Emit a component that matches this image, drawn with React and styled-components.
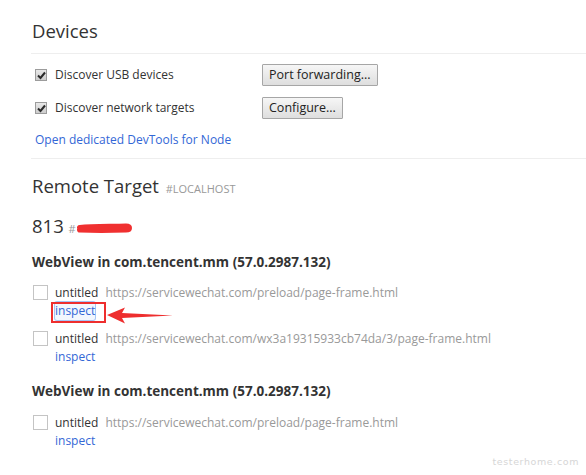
import React from "react";
import styled, { createGlobalStyle } from "styled-components";

const Global = createGlobalStyle`
  html, body { margin: 0; padding: 0; background: #fff; }
  body { font-family: "Open Sans", "Noto Sans", sans-serif; color: #333; }
  * { box-sizing: border-box; }
`;

const Page = styled.div`
  position: relative;
  width: 586px;
  height: 475px;
  overflow: hidden;
  padding: 19px 0 0 31px;
  font-size: 12px;
`;

const SectionHeader = styled.div`
  font-size: 18.5px;
  line-height: 24px;
  font-weight: 400;
  padding: 0 0 10px 1px;
  border-bottom: 1px solid #eee;
  color: #333;
`;

const DeviceBody = styled.div`
  display: flex;
  flex-direction: column;
  gap: 11px;
  padding: 10px 0 8px 4px;
  border-bottom: 1px solid #eee;
`;

const OptionRow = styled.div`
  display: flex;
  align-items: center;
  height: 22px;
`;

const OptionLabel = styled.label`
  display: flex;
  align-items: center;
  gap: 8px;
  width: 227px;
  line-height: 18px;
`;

const CheckBox = styled.span`
  flex: none;
  width: 12px;
  height: 12px;
  border: 1px solid ${(p) => (p.checked ? "#9c9c9c" : "#c4c4c4")};
  background: ${(p) => (p.checked ? "linear-gradient(#e8e8e8, #cdcdcd)" : "#fff")};
  display: flex;
  align-items: center;
  justify-content: center;
`;

const Button = styled.button`
  font-family: inherit;
  font-size: 12.5px;
  color: #222;
  height: 22px;
  padding: 0 6px;
  border: 1px solid #a6a6a6;
  border-radius: 1px;
  background: linear-gradient(#f6f6f6, #dedede);
  line-height: 18px;
`;

const Link = styled.a`
  color: #3367d6;
  text-decoration: none;
  line-height: 20px;
  height: 20px;
  display: block;
`;

const RemoteHeader = styled.div`
  margin-top: ${(p) => p.top}px;
  padding-left: 1px;
  font-size: 18.5px;
  line-height: 24px;
  height: 24px;
  color: #333;
`;

const Tag = styled.span`
  font-size: 11px;
  line-height: 1;
  color: #999;
  text-transform: uppercase;
  position: relative;
  margin-left: ${(p) => (p.tight ? 0 : 2)}px;
`;

const Scribble = styled.svg`
  position: absolute;
  left: 7px;
  top: 1px;
`;

const BrowserHeader = styled.div`
  margin-top: ${(p) => p.top}px;
  padding-left: 1px;
  font-weight: 700;
  font-size: 13.5px;
  line-height: 18px;
  color: #333;
`;

const TargetList = styled.div`
  display: flex;
  flex-direction: column;
  gap: 10px;
  margin-top: ${(p) => p.top}px;
  padding-left: 2px;
`;

const Target = styled.div`
  display: flex;
  gap: 7px;
  position: relative;
`;

const TargetBox = styled(CheckBox)`
  width: 15px;
  height: 15px;
  margin-top: 1px;
`;

const TargetInfo = styled.div`
  display: flex;
  flex-direction: column;
  line-height: 18px;
`;

const TitleLine = styled.div`
  display: flex;
  gap: 7px;
  white-space: nowrap;
`;

const Url = styled.span`
  color: #999;
`;

const Inspect = styled.a`
  color: #3367d6;
  text-decoration: none;
  align-self: flex-start;
  position: relative;
  ${(p) =>
    p.focused &&
    `
    border-radius: 2px;
    box-shadow: 0 0 0 1px #a6c6f6;
    background: rgba(166,198,246,0.15);
  `}
`;

const RedBox = styled.div`
  position: absolute;
  left: -4px;
  top: 0;
  width: 55px;
  height: 21px;
  border: 2px solid #ee2e2e;
`;

const Arrow = styled.svg`
  position: absolute;
  left: 52px;
  top: 5px;
`;

const Watermark = styled.div`
  position: absolute;
  right: 7px;
  bottom: 8px;
  font-family: "DejaVu Sans", sans-serif;
  font-size: 9.5px;
  letter-spacing: 0.6px;
  color: #d6d6d6;
`;

const Check = () => (
  <svg width="9" height="9" viewBox="0 0 9 9">
    <path d="M1 4.5 L3.5 7 L8 1.5" fill="none" stroke="#2a2a2a" strokeWidth="2" />
  </svg>
);

const targetsA = [
  { url: "https://servicewechat.com/preload/page-frame.html", focused: true },
  { url: "https://servicewechat.com/wx3a19315933cb74da/3/page-frame.html" },
];
const targetsB = [{ url: "https://servicewechat.com/preload/page-frame.html" }];

const TargetItem = ({ url, focused }) => (
  <Target>
    <TargetBox />
    <TargetInfo>
      <TitleLine>
        <span>untitled</span>
        <Url>{url}</Url>
      </TitleLine>
      <Inspect focused={focused}>
        inspect
        {focused && (
          <>
            <RedBox />
            <Arrow width="68" height="17" viewBox="0 0 68 17">
              <path d="M0 8 L18 0.5 L15 6 L66 8.5 L15 11 L18 16.5 Z" fill="#ee2e2e" />
            </Arrow>
          </>
        )}
      </Inspect>
    </TargetInfo>
  </Target>
);

export default function App() {
  return (
    <>
      <Global />
      <Page>
        <SectionHeader>Devices</SectionHeader>
        <DeviceBody>
          <OptionRow>
            <OptionLabel>
              <CheckBox checked>
                <Check />
              </CheckBox>
              Discover USB devices
            </OptionLabel>
            <Button>Port forwarding...</Button>
          </OptionRow>
          <OptionRow>
            <OptionLabel>
              <CheckBox checked>
                <Check />
              </CheckBox>
              Discover network targets
            </OptionLabel>
            <Button>Configure...</Button>
          </OptionRow>
          <Link>Open dedicated DevTools for Node</Link>
        </DeviceBody>
        <RemoteHeader top={15}>
          Remote Target <Tag>#LOCALHOST</Tag>
        </RemoteHeader>
        <RemoteHeader top={16}>
          813{" "}
          <Tag tight>
            #
            <Scribble width="58" height="12" viewBox="0 0 58 12">
              <path d="M4 6 C16 4.5, 34 5, 50 4.5 C54 4.5, 54 7.5, 50 7.5 C34 8, 16 8, 4 7.5" fill="none" stroke="#f03030" strokeWidth="6" strokeLinecap="round" />
            </Scribble>
          </Tag>
        </RemoteHeader>
        <BrowserHeader top={15}>WebView in com.tencent.mm (57.0.2987.132)</BrowserHeader>
        <TargetList top={13}>
          {targetsA.map((t, i) => (
            <TargetItem key={i} {...t} />
          ))}
        </TargetList>
        <BrowserHeader top={16}>WebView in com.tencent.mm (57.0.2987.132)</BrowserHeader>
        <TargetList top={14}>
          {targetsB.map((t, i) => (
            <TargetItem key={i} {...t} />
          ))}
        </TargetList>
        <Watermark>testerhome.com</Watermark>
      </Page>
    </>
  );
}
